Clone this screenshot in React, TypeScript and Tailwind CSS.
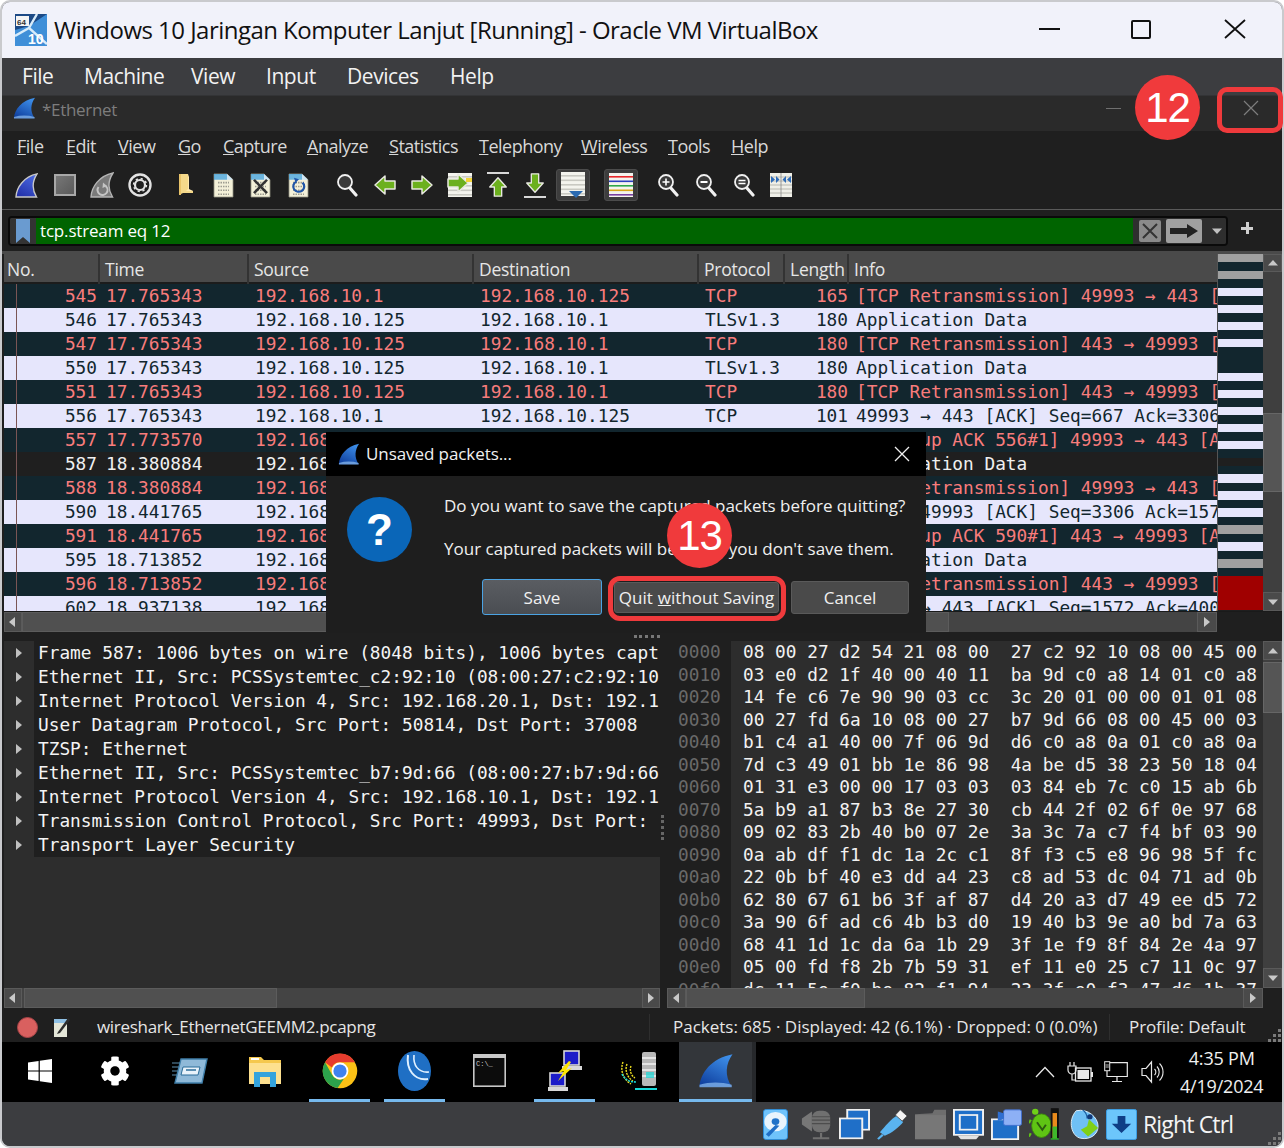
import React from "react";
import { FaCog } from "react-icons/fa";

const UI = "font-['Open_Sans','Noto_Sans',sans-serif]";
const MONO = "font-['DejaVu_Sans_Mono',monospace]";

/* ---------- data ---------- */
const A = "192.168.10.1";
const B = "192.168.10.125";
type Row = [string, string, string, string, string, string, string, "r" | "l" | "s"];
const rows: Row[] = [
  ["545", "17.765343", A, B, "TCP", "165", "[TCP Retransmission] 49993 → 443 [", "r"],
  ["546", "17.765343", B, A, "TLSv1.3", "180", "Application Data", "l"],
  ["547", "17.765343", B, A, "TCP", "180", "[TCP Retransmission] 443 → 49993 [", "r"],
  ["550", "17.765343", B, A, "TLSv1.3", "180", "Application Data", "l"],
  ["551", "17.765343", B, A, "TCP", "180", "[TCP Retransmission] 443 → 49993 [", "r"],
  ["556", "17.765343", A, B, "TCP", "101", "49993 → 443 [ACK] Seq=667 Ack=3306", "l"],
  ["557", "17.773570", A, B, "TCP", "101", "[TCP Dup ACK 556#1] 49993 → 443 [A", "r"],
  ["587", "18.380884", A, B, "TLSv1.3", "1006", "Application Data", "s"],
  ["588", "18.380884", A, B, "TCP", "1006", "[TCP Retransmission] 49993 → 443 [", "r"],
  ["590", "18.441765", B, A, "TCP", "101", "443 → 49993 [ACK] Seq=3306 Ack=157", "l"],
  ["591", "18.441765", B, A, "TCP", "101", "[TCP Dup ACK 590#1] 443 → 49993 [A", "r"],
  ["595", "18.713852", B, A, "TLSv1.3", "180", "Application Data", "l"],
  ["596", "18.713852", B, A, "TCP", "180", "[TCP Retransmission] 443 → 49993 [", "r"],
  ["602", "18.937138", A, B, "TCP", "101", "49993 → 443 [ACK] Seq=1572 Ack=400", "l"],
];
const details = [
  "Frame 587: 1006 bytes on wire (8048 bits), 1006 bytes capt",
  "Ethernet II, Src: PCSSystemtec_c2:92:10 (08:00:27:c2:92:10",
  "Internet Protocol Version 4, Src: 192.168.20.1, Dst: 192.1",
  "User Datagram Protocol, Src Port: 50814, Dst Port: 37008",
  "TZSP: Ethernet",
  "Ethernet II, Src: PCSSystemtec_b7:9d:66 (08:00:27:b7:9d:66",
  "Internet Protocol Version 4, Src: 192.168.10.1, Dst: 192.1",
  "Transmission Control Protocol, Src Port: 49993, Dst Port: ",
  "Transport Layer Security",
];
const hex: [string, string, string][] = [
  ["0000", "08 00 27 d2 54 21 08 00", "27 c2 92 10 08 00 45 00"],
  ["0010", "03 e0 d2 1f 40 00 40 11", "ba 9d c0 a8 14 01 c0 a8"],
  ["0020", "14 fe c6 7e 90 90 03 cc", "3c 20 01 00 00 01 01 08"],
  ["0030", "00 27 fd 6a 10 08 00 27", "b7 9d 66 08 00 45 00 03"],
  ["0040", "b1 c4 a1 40 00 7f 06 9d", "d6 c0 a8 0a 01 c0 a8 0a"],
  ["0050", "7d c3 49 01 bb 1e 86 98", "4a be d5 38 23 50 18 04"],
  ["0060", "01 31 e3 00 00 17 03 03", "03 84 eb 7c c0 15 ab 6b"],
  ["0070", "5a b9 a1 87 b3 8e 27 30", "cb 44 2f 02 6f 0e 97 68"],
  ["0080", "09 02 83 2b 40 b0 07 2e", "3a 3c 7a c7 f4 bf 03 90"],
  ["0090", "0a ab df f1 dc 1a 2c c1", "8f f3 c5 e8 96 98 5f fc"],
  ["00a0", "22 0b bf 40 e3 dd a4 23", "c8 ad 53 dc 04 71 ad 0b"],
  ["00b0", "62 80 67 61 b6 3f af 87", "d4 20 a3 d7 49 ee d5 72"],
  ["00c0", "3a 90 6f ad c6 4b b3 d0", "19 40 b3 9e a0 bd 7a 63"],
  ["00d0", "68 41 1d 1c da 6a 1b 29", "3f 1e f9 8f 84 2e 4a 97"],
  ["00e0", "05 00 fd f8 2b 7b 59 31", "ef 11 e0 25 c7 11 0c 97"],
  ["00f0", "dc 11 5e f0 be 82 f1 94", "23 3f e0 f3 47 d6 1b 37"],
];
const GR = "bg-[#a0a0a0]", DK = "bg-[#12262e]", LT = "bg-[#e6e6fc]";
const mini: [number, string][] = [
  [8, GR], [8.67, DK], [8.33, GR], [8.67, DK], [8.33, LT], [8.67, DK], [8.33, LT], [8.67, DK], [8.33, LT], [8.67, DK], [8.33, LT],
  [25.67, DK], [8.33, LT], [8.67, DK], [8.33, LT], [8.67, DK], [8.33, LT], [8.67, DK], [8.33, LT], [8.67, DK], [8.33, LT], [8.67, DK],
  [8.33, "bg-[#1f1f1f]"], [8.67, DK], [8.33, LT], [8.67, DK], [8.33, LT], [8.67, DK], [8.33, LT], [8.67, DK], [8.33, GR], [8.67, DK], [8.33, LT], [8.67, DK], [8.33, GR], [8.67, DK],
  [33.33, "bg-[#a00000]"],
];

/* ---------- icons ---------- */
function Fin({ w = 24, h = 26, id, c1 = "#3d8ee8", c2 = "#0f3f9e", stroke }: { w?: number; h?: number; id: string; c1?: string; c2?: string; stroke?: string }) {
  return (
    <svg width={w} height={h} viewBox="0 0 24 26" preserveAspectRatio="none">
      <defs>
        <linearGradient id={id} x1="0.7" y1="0" x2="0.2" y2="1">
          <stop offset="0" stopColor={c1} />
          <stop offset="1" stopColor={c2} />
        </linearGradient>
      </defs>
      <path d="M1 25C1.5 15 9 4 23 1C18.5 8 17.5 17 22.5 25Z" fill={`url(#${id})`} stroke={stroke} strokeWidth={stroke ? 1.4 : 0} />
      {!stroke && <path d="M1 23.5C8 21.5 15 21.5 22.5 23.5V25.5H1Z" fill="#7fb0e8" opacity="0.8" />}
    </svg>
  );
}
function RestartIcon() {
  return (
    <svg width="24" height="26" viewBox="0 0 24 26">
      <path d="M1 25C1.5 15 9 4 23 1C18.5 8 17.5 17 22.5 25Z" fill="#7a7a7a" stroke="#b4b4b4" strokeWidth="1.4" />
      <path d="M8.5 15a5 5 0 1 0 7 -1" fill="none" stroke="#c4c4c4" strokeWidth="2" />
      <path d="M13 10.5l4 3.5-4.5 2z" fill="#c4c4c4" />
    </svg>
  );
}
function GearIcon() {
  return (
    <svg width="24" height="24" viewBox="0 0 24 24">
      <circle cx="12" cy="12" r="10.5" fill="none" stroke="#e2e2e2" strokeWidth="2.4" />
      <circle cx="12" cy="12" r="5" fill="none" stroke="#e2e2e2" strokeWidth="2.2" />
      <circle cx="12" cy="12" r="6.4" fill="none" stroke="#e2e2e2" strokeWidth="1.6" strokeDasharray="2.2 2.8" />
    </svg>
  );
}
function FolderSmall() {
  return (
    <svg width="16" height="24" viewBox="0 0 16 24">
      <path d="M1 1H10V17L15 18V20H5L1 22Z" fill="#f5d98a" />
      <path d="M1 1H3V22H1Z" fill="#e9c46a" />
      <path d="M10 1L11 4V16L15 18H8L10 16Z" fill="#ffe9ae" />
    </svg>
  );
}
function Doc({ children, corner = "#3fa2e0" }: { children?: React.ReactNode; corner?: string }) {
  return (
    <svg width="21" height="25" viewBox="0 0 21 26" preserveAspectRatio="none">
      <path d="M1 1H14L20 7V25H1Z" fill="#f3f0d8" stroke="#8f8f80" strokeWidth="0.8" />
      <path d="M1 1H14V7H1Z" fill={corner} opacity="0.75" />
      <path d="M14 1L20 7H14Z" fill="#cfe6f5" />
      <path d="M5 10h11M5 14h11M5 18h11M5 22h11" stroke="#9c9c90" strokeWidth="1.6" strokeDasharray="1.5 1" />
      {children}
    </svg>
  );
}
function Lens({ mark }: { mark?: "plus" | "minus" | "eq" }) {
  return (
    <svg width="22" height="24" viewBox="0 0 22 24">
      <path d="M13 14l7 8" stroke="#f0f0f0" strokeWidth="3.2" strokeLinecap="round" />
      <circle cx="9" cy="9" r="7" fill="#3a3a3a" stroke="#f0f0f0" strokeWidth="1.8" />
      {mark === "plus" && <path d="M5.5 9h7M9 5.5v7" stroke="#fff" strokeWidth="1.6" />}
      {mark === "minus" && <path d="M5.5 9h7" stroke="#fff" strokeWidth="1.8" />}
      {mark === "eq" && <path d="M5.5 7.5h7M5.5 10.5h7" stroke="#fff" strokeWidth="1.4" />}
    </svg>
  );
}
function ArrowG({ dir, s = 24 }: { dir: "l" | "r" | "u" | "d"; s?: number }) {
  const rot = { r: 0, l: 180, d: 90, u: 270 }[dir];
  return (
    <svg width={s} height={s} viewBox="0 0 24 24">
      <g transform={`rotate(${rot} 12 12)`}>
        <path d="M2 8H12V3L22 12L12 21V16H2Z" fill="#6cb01e" stroke="#e8e8e0" strokeWidth="1.5" strokeLinejoin="round" />
      </g>
    </svg>
  );
}
function Lines({ color }: { color?: boolean }) {
  const cs = color ? ["#e8272a", "#2a3ec0", "#2ea84a", "#d9a516", "#7a3fa0"] : ["#c9c9c2", "#c9c9c2", "#c9c9c2", "#c9c9c2", "#c9c9c2"];
  return (
    <svg width="24" height="24" viewBox="0 0 24 24">
      <rect x="0" y="0" width="24" height="24" fill="#f4f4ee" />
      {[3, 7.5, 12, 16.5, 21].map((y, i) => (
        <rect key={y} x="0" y={y} width="24" height="1.6" fill={cs[i]} />
      ))}
    </svg>
  );
}
const Slot = ({ children }: { children: React.ReactNode }) => (
  <div className="w-[37.7px] h-full flex items-center justify-center shrink-0">{children}</div>
);
function ToolBtn({ children }: { children: React.ReactNode }) {
  return (
    <div className="w-[37.7px] h-full flex items-center justify-center shrink-0">
      <div className="w-[34px] h-[32px] rounded-[3px] bg-[#3d3d3d] border border-[#4c4c4c] flex items-center justify-center">{children}</div>
    </div>
  );
}
function WinLogo() {
  return (
    <svg width="24" height="24" viewBox="0 0 24 24" fill="#fff">
      <path d="M0 3.4L10.6 2V11.4H0ZM11.8 1.8L24 0V11.4H11.8ZM0 12.6H10.6V22L0 20.6ZM11.8 12.6H24V24L11.8 22.2Z" />
    </svg>
  );
}
function ServerMgr() {
  return (
    <svg width="36" height="28" viewBox="0 0 36 28">
      <path d="M0 6h10M0 10h8M0 14h8M0 18h6" stroke="#5f8fb0" strokeWidth="1.2" />
      <path d="M9 2H35L30 26H3Z" fill="#8fb9d8" stroke="#3f7ea8" strokeWidth="1.4" />
      <path d="M11 10H28L26 18H9Z" fill="#e8f2fa" stroke="#2b6d99" />
      <path d="M14 13H24" stroke="#2b6d99" strokeWidth="1.5" />
    </svg>
  );
}
function ExplorerIcon() {
  return (
    <svg width="32" height="32" viewBox="0 0 32 32">
      <path d="M0 2H12L15 5H32V29H0Z" fill="#f5c84e" />
      <path d="M0 8H32V29H0Z" fill="#fde08f" />
      <path d="M2 3H10V5H2Z" fill="#fff" />
      <path d="M5 17H27V32H21V22H11V32H5Z" fill="#35a3dc" />
    </svg>
  );
}
function Chrome() {
  return (
    <svg width="36" height="36" viewBox="0 0 24 24">
      <circle cx="12" cy="12" r="11.5" fill="#fbc116" />
      <path d="M2 6.2A11.5 11.5 0 0 1 22 6.2H12A6 6 0 0 0 6.6 9.6Z" fill="#e53c2e" />
      <path d="M2 6.2A11.5 11.5 0 0 0 10.4 23.4L14.6 17.2A6 6 0 0 1 6.6 14.4Z" fill="#2ca24c" />
      <circle cx="12" cy="12" r="5.6" fill="#fff" />
      <circle cx="12" cy="12" r="4.4" fill="#3f82ee" />
    </svg>
  );
}
function WinBox() {
  return (
    <svg width="33" height="40" viewBox="0 0 33 40">
      <ellipse cx="16.5" cy="20" rx="16.5" ry="20" fill="#1f6fc4" />
      <path d="M10 4C8 18 16 30 30 28" fill="none" stroke="#dff0ff" strokeWidth="2" />
      <path d="M16 4C15 14 20 22 31 21" fill="none" stroke="#dff0ff" strokeWidth="1.6" />
    </svg>
  );
}
function Cmd() {
  return (
    <svg width="33" height="33" viewBox="0 0 33 33">
      <rect x="0.8" y="0.8" width="31.4" height="31.4" fill="#0c0c0c" stroke="#c8c8c8" strokeWidth="1.6" />
      <rect x="1" y="1" width="31" height="3" fill="#c8c8c8" />
      <text x="3" y="12" fontSize="7" fill="#c8c8c8" fontFamily="Liberation Mono, monospace">C:\_</text>
    </svg>
  );
}
function NetPcs() {
  return (
    <svg width="36" height="42" viewBox="0 0 36 42">
      <rect x="17" y="1" width="15" height="14" fill="#1c1cc8" stroke="#d8d8d8" strokeWidth="1.6" />
      <path d="M15 16h20v4H15z" fill="#d8d8d8" />
      <rect x="3" y="23" width="15" height="13" fill="#1c1cc8" stroke="#d8d8d8" strokeWidth="1.6" />
      <path d="M1 37h20v4H1z" fill="#d8d8d8" />
      <path d="M22 11L11 23L17 21L11 31L25 18L19 20L24 12Z" fill="#ffe600" />
    </svg>
  );
}
function Scanner() {
  return (
    <svg width="38" height="42" viewBox="0 0 38 42">
      <path d="M2 12a18 18 0 0 0 8 22M6 14a14 14 0 0 0 6 17M10 16a10 10 0 0 0 4 12" fill="none" stroke="#f0e020" strokeWidth="1.4" strokeDasharray="2 1" />
      <path d="M1 24c3 6 8 8 14 8" fill="none" stroke="#18d8d8" strokeWidth="1.6" strokeDasharray="2 1" />
      <rect x="21" y="2" width="14" height="34" rx="2" fill="#b8b8b8" />
      <path d="M21 8h14M21 14h14M21 20h14M21 26h14" stroke="#e4e4e4" strokeWidth="2" />
      <path d="M14 39h22" stroke="#18d8d8" strokeWidth="2" />
      <rect x="25" y="22" width="8" height="6" fill="#18d8d8" opacity="0.7" />
    </svg>
  );
}
function Tray() {
  return (
    <>
      <svg width="20" height="12" viewBox="0 0 20 12" className="ml-[279px] shrink-0">
        <path d="M1 11L10 1.5L19 11" fill="none" stroke="#e8e8e8" strokeWidth="1.3" />
      </svg>
      <svg width="26" height="22" viewBox="0 0 26 22" className="ml-[12px] shrink-0">
        <path d="M3 1v4M7 1v4M1 5h8v4a4 4 0 0 1-8 0zM5 13v6h4" fill="none" stroke="#e8e8e8" strokeWidth="1.2" />
        <rect x="8.5" y="7" width="15.5" height="13" fill="none" stroke="#e8e8e8" strokeWidth="1.3" />
        <rect x="10.5" y="9" width="11.5" height="9" fill="#e8e8e8" />
        <rect x="24" y="11" width="2" height="5" fill="#e8e8e8" />
      </svg>
      <svg width="24" height="22" viewBox="0 0 24 22" className="ml-[11px] shrink-0">
        <rect x="0.7" y="0.7" width="5" height="9" fill="#000" stroke="#e8e8e8" />
        <path d="M1.5 4h3.4M1.5 6h3.4" stroke="#e8e8e8" strokeWidth="0.8" />
        <path d="M6 1.7H23.3V15.5H3V10" fill="none" stroke="#e8e8e8" strokeWidth="1.2" />
        <path d="M13 15.5V20M8 20.5H18" stroke="#e8e8e8" strokeWidth="1.2" />
      </svg>
      <svg width="23" height="24" viewBox="0 0 23 24" className="ml-[13px] shrink-0">
        <path d="M1 8.5H5L10.5 2V22L5 15.5H1Z" fill="none" stroke="#e8e8e8" strokeWidth="1.2" />
        <path d="M13.5 9a4 4 0 0 1 0 6M16 6.5a8 8 0 0 1 0 11M18.5 3.5a12 12 0 0 1 0 17" fill="none" stroke="#e8e8e8" strokeWidth="1.1" />
      </svg>
    </>
  );
}
const SI = ({ children }: { children: React.ReactNode }) => (
  <div className="w-[38px] shrink-0 flex items-center justify-center">{children}</div>
);
function StatusIcons() {
  return (
    <>
      <SI>
        <svg width="25" height="31" viewBox="0 0 26 37" preserveAspectRatio="none">
          <rect x="0.5" y="0.5" width="25" height="36" rx="3" fill="#6fc3fb" stroke="#2a8fe0" />
          <circle cx="13" cy="15" r="11.5" fill="#e9f4fc" />
          <circle cx="13" cy="15" r="4" fill="#2072c8" />
          <path d="M13 19L3 30L6 33L17 20Z" fill="#1f6ec6" />
        </svg>
      </SI>
      <div className="w-[3px] shrink-0"></div>
      <SI>
        <svg width="31" height="31" viewBox="0 0 34 36" preserveAspectRatio="none">
          <path d="M1 11L12 3V26L1 18Z" fill="#777" />
          <rect x="12" y="2" width="20" height="25" rx="8" fill="#707070" />
          <path d="M12 9h20M12 13h20M12 17h20" stroke="#4d4d4d" strokeWidth="1.4" />
          <path d="M22 28V33M13 34H31" stroke="#707070" strokeWidth="2.4" />
        </svg>
      </SI>
      <SI>
        <svg width="31" height="31" viewBox="0 0 32 36" preserveAspectRatio="none">
          <rect x="8.5" y="1" width="22.5" height="23" fill="#1f6fc8" stroke="#f0f0f0" strokeWidth="2" />
          <rect x="1" y="11" width="23" height="23" fill="#1f6fc8" stroke="#f0f0f0" strokeWidth="2" />
        </svg>
      </SI>
      <SI>
        <svg width="31" height="31" viewBox="0 0 32 36" preserveAspectRatio="none">
          <path d="M3 27C8 20 15 11 20 8L27 15C24 20 15 28 8 31Z" fill="#5ab4f0" />
          <path d="M19 7L24 1L31 8L26 14Z" fill="#f4f4f4" stroke="#333" strokeWidth="0.6" />
          <path d="M6 30L1 35" stroke="#5ab4f0" strokeWidth="2.4" />
        </svg>
      </SI>
      <SI>
        <svg width="31" height="31" viewBox="0 0 32 36" preserveAspectRatio="none">
          <path d="M0 6L18 5L20 1H32V35H0Z" fill="#6e6e6e" />
          <path d="M0 7H32V35H0Z" fill="#777" />
        </svg>
      </SI>
      <SI>
        <svg width="31" height="31" viewBox="0 0 32 36" preserveAspectRatio="none">
          <rect x="1" y="1" width="30" height="29" fill="#1f6fc8" stroke="#f2f2f2" strokeWidth="2" />
          <rect x="7" y="7" width="18" height="17" fill="none" stroke="#f2f2f2" strokeWidth="2" />
          <path d="M5 31H27L24 35H8Z" fill="#e2e2e2" />
        </svg>
      </SI>
      <SI>
        <svg width="31" height="31" viewBox="0 0 32 36" preserveAspectRatio="none">
          <rect x="1" y="12" width="27" height="23" fill="#1f6fc8" stroke="#f2f2f2" strokeWidth="2" />
          <rect x="13" y="1" width="18.5" height="18" rx="2" fill="#8db0f5" stroke="#3f6fd0" />
          <path d="M13 5L7 3V14L13 12Z" fill="#2f6fd0" />
        </svg>
      </SI>
      <div className="w-px shrink-0"></div>
      <SI>
        <svg width="32" height="32" viewBox="0 0 36 38" preserveAspectRatio="none">
          <ellipse cx="14" cy="21" rx="11" ry="14" fill="#5fc414" stroke="#3f8c0c" />
          <circle cx="7" cy="4.5" r="3.6" fill="#6fd018" />
          <path d="M9 17L15 26L19 20" fill="none" stroke="#2c5a10" strokeWidth="2.2" />
          <path d="M2 14L0 18M2 30L0 34M26 30L28 35" stroke="#5fc414" strokeWidth="2.4" />
          <rect x="25" y="0.8" width="8" height="35.5" fill="#111" stroke="#111" />
          <rect x="26.5" y="6" width="5" height="30" fill="#e98b1c" />
          <rect x="26.5" y="22" width="5" height="14" fill="#3fb82c" />
          <rect x="24.5" y="36" width="9" height="1.4" fill="#26d626" />
        </svg>
      </SI>
      <SI>
        <svg width="31" height="31" viewBox="0 0 34 36" preserveAspectRatio="none">
          <path d="M9 2C22 -1 33 10 33 20C33 30 24 36 14 34C4 32 -1 14 9 2Z" fill="#6fc0f5" stroke="#e8f6ff" />
          <path d="M16 1C20 4 21 8 21 11" fill="none" stroke="#185a9e" strokeWidth="1.4" />
          <circle cx="24" cy="9" r="3" fill="#123a7a" />
          <path d="M23 12L33 22L22 32L14 24L21 20Z" fill="#7fd018" />
        </svg>
      </SI>
      <SI>
        <svg width="31" height="31" viewBox="0 0 32 36" preserveAspectRatio="none">
          <rect x="0.5" y="0.5" width="31" height="35" rx="2" fill="#6cc6fb" stroke="#3aa2ec" />
          <path d="M12 8H20V17H26L16 28L6 17H12Z" fill="#0f3e86" />
        </svg>
      </SI>
    </>
  );
}
function Grip({ className }: { className: string }) {
  return (
    <svg width="16" height="16" viewBox="0 0 16 16" fill="#7a7a7a" className={className}>
      <rect x="12" y="2" width="3" height="3" />
      <rect x="7" y="7" width="3" height="3" />
      <rect x="12" y="7" width="3" height="3" />
      <rect x="2" y="12" width="3" height="3" />
      <rect x="7" y="12" width="3" height="3" />
      <rect x="12" y="12" width="3" height="3" />
    </svg>
  );
}
const Tri = ({ d, c = "#c8c8c8" }: { d: "l" | "r" | "u" | "d"; c?: string }) => {
  const p = { l: "M9 2L3 7L9 12Z", r: "M4 2L10 7L4 12Z", u: "M2 9.5L7 4L12 9.5Z", d: "M2 4.5L7 10L12 4.5Z" }[d];
  return (
    <svg width="14" height="14" viewBox="0 0 14 14">
      <path d={p} fill={c} />
    </svg>
  );
};
const ScrollBtn = ({ d, cls }: { d: "l" | "r" | "u" | "d"; cls: string }) => (
  <div className={`${cls} shrink-0 flex items-center justify-center bg-[#4a4a4a] border border-[#5a5a5a]`}>
    <Tri d={d} />
  </div>
);
const Badge = ({ n, cls }: { n: string; cls: string }) => (
  <div className={`absolute ${cls} w-[65px] h-[65px] rounded-full bg-[#f03a3c] flex items-center justify-center text-white text-[42px] leading-none font-['Liberation_Sans',sans-serif] tracking-[-1px]`}>
    {n}
  </div>
);

/* ---------- app ---------- */
export default function App() {
  return (
    <div className={`relative w-[1284px] h-[1148px] overflow-hidden bg-white ${UI}`}>
      <div className="w-full h-full flex flex-col border-2 border-[#c9cacd] rounded-[10px] overflow-hidden bg-[#3c3d40]">
        {/* title bar */}
        <div className="h-[56px] shrink-0 bg-[#f1f2fa] flex items-center pl-[13px] text-[#111]">
          <svg width="32" height="32" viewBox="0 0 32 32" className="shrink-0">
            <rect width="32" height="32" fill="#1c4a86" />
            <path d="M0 16L14 12L32 0V32H0Z" fill="#3f8fd8" />
            <path d="M22 0L14 14L32 30M0 22L14 14" stroke="#d8ecfa" strokeWidth="2.4" fill="none" />
            <rect x="1" y="2" width="13" height="10" fill="#f4f4f4" />
            <text x="2" y="10.5" fontSize="8" fontWeight="700" fill="#333" fontFamily="Liberation Sans, sans-serif">64</text>
            <text x="13" y="30" fontSize="14" fontWeight="700" fill="#fff" fontFamily="Liberation Sans, sans-serif">10</text>
          </svg>
          <div className="ml-[7px] text-[24px] leading-none tracking-[-0.53px] whitespace-nowrap">Windows 10 Jaringan Komputer Lanjut [Running] - Oracle VM VirtualBox</div>
          <div className="ml-auto flex items-center">
            <div className="w-[21px] h-[2px] bg-[#111] mb-[2px]"></div>
            <div className="ml-[71px] w-[20px] h-[19px] border-2 border-[#111] rounded-[2px] mb-[2px]"></div>
            <svg width="22" height="20" viewBox="0 0 22 20" className="ml-[73px] mr-[36px] mb-[2px]">
              <path d="M1 1L21 19M21 1L1 19" stroke="#111" strokeWidth="1.8" />
            </svg>
          </div>
        </div>

        {/* vbox menu */}
        <div className="h-[38px] shrink-0 bg-[#3c3d40] flex items-center pl-[20px] text-[21px] text-[#f2f2f2] leading-none tracking-[-0.45px] border-b border-[#333436]">
          <div className="w-[62px]">File</div>
          <div className="w-[107px]">Machine</div>
          <div className="w-[75px]">View</div>
          <div className="w-[81px]">Input</div>
          <div className="w-[103px]">Devices</div>
          <div>Help</div>
        </div>

        {/* wireshark title */}
        <div className="h-[35px] shrink-0 bg-[#2a2a2a] flex items-center pl-[11px] pb-[11px]">
          <Fin id="fin-title" w={23} h={22} />
          <div className="ml-[6px] text-[17px] text-[#7d7d7d] tracking-[-0.3px] mt-[3px]">*Ethernet</div>
          <div className="ml-auto mr-[161px] w-[15px] h-px bg-[#707070]"></div>
        </div>

        {/* wireshark menu */}
        <div className="h-[32px] shrink-0 bg-[#1f1f1f] flex items-center pl-[15px] pb-[2px] text-[18px] text-[#d8d8d8] leading-none tracking-[-0.5px]">
          {[
            ["w-[49px]", "F", "ile"], ["w-[52px]", "E", "dit"], ["w-[60px]", "V", "iew"], ["w-[45px]", "G", "o"],
            ["w-[84px]", "C", "apture"], ["w-[82px]", "A", "nalyze"], ["w-[90px]", "S", "tatistics"], ["w-[102px]", "T", "elephony"],
            ["w-[87px]", "W", "ireless"], ["w-[63px]", "T", "ools"], ["w-[50px]", "H", "elp"],
          ].map(([w, a, b], i) => (
            <div key={i} className={`${w} whitespace-nowrap`}><u>{a}</u>{b}</div>
          ))}
        </div>

        {/* toolbar */}
        <div className="h-[46px] shrink-0 bg-[#1f1f1f] flex items-center pl-[6px] pb-[2px]">
          <Slot><Fin id="fin-start" w={23} h={25} c1="#4a68e0" c2="#2230a8" stroke="#c8c8c8" /></Slot>
          <Slot>
            <div className="w-[22px] h-[22px] bg-gradient-to-br from-[#777] to-[#5a5a5a] border-[2px] border-[#a8a8a8]"></div>
          </Slot>
          <Slot><RestartIcon /></Slot>
          <Slot><GearIcon /></Slot>
          <div className="w-[8px] shrink-0"></div>
          <Slot><FolderSmall /></Slot>
          <Slot><Doc /></Slot>
          <Slot>
            <Doc corner="#3fa2e0">
              <path d="M4 7L17 21M17 7L4 21" stroke="#333" strokeWidth="2.6" />
            </Doc>
          </Slot>
          <Slot>
            <Doc>
              <path d="M14.5 10a5.5 5.5 0 1 1 -6 -1" fill="none" stroke="#2056a8" strokeWidth="2.2" />
              <path d="M6 5l5 1.5-3.4 3.6z" fill="#2056a8" />
            </Doc>
          </Slot>
          <div className="w-[10.5px] shrink-0"></div>
          <Slot><Lens /></Slot>
          <Slot><ArrowG dir="l" /></Slot>
          <Slot><ArrowG dir="r" /></Slot>
          <Slot>
            <div className="relative w-[24px] h-[24px]">
              <Lines />
              <div className="absolute left-[-2px] top-[-2px]"><ArrowG dir="r" /></div>
              <div className="absolute right-0 top-[5px] w-[6px] h-[4px] bg-[#f2d43a]"></div>
            </div>
          </Slot>
          <Slot>
            <div className="flex flex-col items-center gap-[2px]">
              <div className="w-[22px] h-[2px] bg-[#d8d8d8]"></div>
              <ArrowG dir="u" s={22} />
            </div>
          </Slot>
          <Slot>
            <div className="flex flex-col items-center gap-[2px]">
              <ArrowG dir="d" s={22} />
              <div className="w-[22px] h-[2px] bg-[#d8d8d8]"></div>
            </div>
          </Slot>
          <ToolBtn>
            <div className="relative w-[24px] h-[26px] overflow-hidden">
              <Lines />
              <div className="absolute left-[8px] bottom-[0px] w-0 h-0 border-l-[7px] border-r-[7px] border-t-[7px] border-l-transparent border-r-transparent border-t-[#2b6ab0]"></div>
            </div>
          </ToolBtn>
          <div className="w-[10px] shrink-0"></div>
          <ToolBtn><Lines color /></ToolBtn>
          <div className="w-[10px] shrink-0"></div>
          <Slot><Lens mark="plus" /></Slot>
          <Slot><Lens mark="minus" /></Slot>
          <Slot><Lens mark="eq" /></Slot>
          <Slot>
            <svg width="22" height="24" viewBox="0 0 22 24">
              <rect width="22" height="24" fill="#efefe8" />
              <path d="M0 4h22M0 8h22M0 12h22M0 16h22M0 20h22" stroke="#b8b8b0" strokeWidth="1" />
              <path d="M11 0v24" stroke="#888" strokeWidth="0.8" />
              <path d="M1 3L5 6.5L1 10ZM9.5 6.5L6 3V10Z" fill="#2f6cb8" />
              <path d="M21 3L17 6.5L21 10ZM12.5 6.5L16 3V10Z" fill="#2f6cb8" />
            </svg>
          </Slot>
        </div>

        {/* filter */}
        <div className="h-[45px] shrink-0 bg-[#1f1f1f] border-t border-[#5a5a5a] border-b-[3px] border-b-[#4a4a4a] pt-[6px] flex items-start pl-[6px]">
          <div className="w-[1220px] h-[30px] rounded-[4px] border-2 border-[#0a0a0a] flex items-stretch overflow-hidden bg-[#2e2e2e]">
            <div className="w-[26px] shrink-0 flex items-center justify-center bg-[#333]">
              <svg width="14" height="24" viewBox="0 0 14 24">
                <path d="M0 0H14V24L7 18L0 24Z" fill="#6a9bd0" />
              </svg>
            </div>
            <div className="flex-1 bg-[#006400] text-white text-[17px] leading-[25px] pl-[4px] tracking-[-0.17px]">tcp.stream eq 12</div>
            <div className="w-[93px] shrink-0 flex items-center bg-[#2e2e2e] pl-[6px]">
              <div className="w-[22px] h-[22px] bg-[#8a8a8a] rounded-[2px] flex items-center justify-center">
                <svg width="16" height="16" viewBox="0 0 16 16"><path d="M1 1L15 15M15 1L1 15" stroke="#333" strokeWidth="2" /></svg>
              </div>
              <div className="ml-[5px] w-[36px] h-[24px] bg-[#a0a0a0] rounded-[2px] flex items-center justify-center">
                <svg width="30" height="16" viewBox="0 0 30 16"><path d="M1 5H18V1L29 8L18 15V11H1Z" fill="#222" /></svg>
              </div>
              <div className="ml-[8px]"><Tri d="d" c="#c0c0c0" /></div>
            </div>
          </div>
          <div className="ml-[13px] mt-[6px] relative w-[12px] h-[12px]">
            <div className="absolute left-[5px] top-0 w-[2.5px] h-[12px] bg-[#cfcfcf]"></div>
            <div className="absolute left-0 top-[5px] w-[12px] h-[2.5px] bg-[#cfcfcf]"></div>
          </div>
        </div>

        {/* packet list */}
        <div className="h-[378px] shrink-0 flex flex-col pl-[2px] bg-[#1f1f1f]">
          <div className="h-[357px] shrink-0 flex">
            <div className="w-[1214px] shrink-0 flex flex-col overflow-hidden border-r border-[#555] relative">
              <div className="h-[30px] shrink-0 grid grid-cols-[96px_149px_225px_225px_86px_64px_1fr] bg-[#4a4a4a] border-b-2 border-[#1c1c1c] text-[17.5px] text-[#e6e6e6] tracking-[-0.25px] leading-[30px]">
                <div className="pl-[3px] border-r-2 border-[#333]">No.</div>
                <div className="pl-[5px] border-r-2 border-[#333]">Time</div>
                <div className="pl-[5px] border-r-2 border-[#333]">Source</div>
                <div className="pl-[5px] border-r-2 border-[#333]">Destination</div>
                <div className="pl-[5px] border-r-2 border-[#333]">Protocol</div>
                <div className="pl-[5px] border-r-2 border-[#333]">Length</div>
                <div className="pl-[5px]">Info</div>
              </div>
              {rows.map((r) => {
                const cls = r[7] === "r" ? "bg-[#12262e] text-[#f87c7c]" : r[7] === "l" ? "bg-[#e6e6fc] text-[#12262e]" : "bg-[#1f1f1f] text-[#f0f0f0]";
                return (
                  <div key={r[0]} className={`h-[24px] shrink-0 grid grid-cols-[93px_158px_225px_225px_100px_43px_1fr] whitespace-pre text-[17.8px] leading-[23px] overflow-hidden ${MONO} ${cls}`}>
                    <div className="text-right">{r[0]}</div>
                    <div className="pl-[9px]">{r[1]}</div>
                    <div>{r[2]}</div>
                    <div>{r[3]}</div>
                    <div>{r[4]}</div>
                    <div className="text-right">{r[5]}</div>
                    <div className="pl-[8px] overflow-hidden">{r[6]}</div>
                  </div>
                );
              })}
              <div className="absolute left-[12px] top-[30px] bottom-0 w-px bg-[#7a5555]"></div>
            </div>
            <div className="w-[45px] shrink-0 flex flex-col overflow-hidden">
              {mini.map(([h, c], i) => (
                <div key={i} className={`${c} shrink-0`} style={{ height: h }}></div>
              ))}
            </div>
            <div className="w-[19px] shrink-0 flex flex-col bg-[#3f3f3f]">
              <ScrollBtn d="u" cls="h-[18px]" />
              <div className="h-[141px]"></div>
              <div className="h-[79px] bg-[#555] border border-[#666]"></div>
              <div className="flex-1"></div>
              <ScrollBtn d="d" cls="h-[19px]" />
            </div>
          </div>
          <div className="h-[21px] shrink-0 flex border-t border-[#1a1a1a]">
            <div className="w-[1213px] flex bg-[#444]">
              <ScrollBtn d="l" cls="w-[18px]" />
              <div className="w-[927px] bg-[#505050] border border-[#5c5c5c]"></div>
              <div className="flex-1"></div>
              <ScrollBtn d="r" cls="w-[20px]" />
            </div>
          </div>
        </div>

        {/* splitter */}
        <div className="h-[9px] shrink-0 bg-[#1f1f1f]"></div>

        {/* panes */}
        <div className="h-[367px] shrink-0 flex pl-[2px] bg-[#1f1f1f]">
          <div className="w-[656px] shrink-0 flex flex-col">
            <div className="h-[347px] shrink-0 flex bg-[#2d2d2d] overflow-hidden">
              <div className="w-[30px] shrink-0 flex flex-col">
                {details.map((d) => (
                  <div key={d} className="h-[24px] shrink-0 flex items-center justify-center">
                    <Tri d="r" c="#c0c0c0" />
                  </div>
                ))}
              </div>
              <div className={`flex-1 min-w-0 flex flex-col overflow-hidden ${MONO} text-[17.8px] leading-[23px] text-[#f4f4f4] whitespace-pre`}>
                {details.map((d) => (
                  <div key={d} className="h-[24px] shrink-0 bg-[#1f1f1f] pl-[4px] overflow-hidden">{d}</div>
                ))}
              </div>
            </div>
            <div className="h-[20px] shrink-0 flex bg-[#444]">
              <ScrollBtn d="l" cls="w-[18px]" />
              <div className="w-[253px] ml-[2px] bg-[#505050] border border-[#5c5c5c]"></div>
              <div className="flex-1"></div>
              <ScrollBtn d="r" cls="w-[18px]" />
            </div>
          </div>
          <div className="w-[7px] shrink-0"></div>
          <div className="flex-1 min-w-0 flex flex-col">
            <div className="h-[347px] shrink-0 flex overflow-hidden">
              <div className={`w-[64px] shrink-0 bg-[#1f1f1f] flex flex-col pl-[11px] text-[#6a6a6a] ${MONO} text-[17.8px] leading-[22.5px]`}>
                {hex.map((h) => <div key={h[0]} className="h-[22.5px] shrink-0">{h[0]}</div>)}
              </div>
              <div className={`w-[532px] shrink-0 bg-[#2d2d2d] flex flex-col pl-[12px] text-[#f2f2f2] ${MONO} text-[17.8px] leading-[22.5px] whitespace-pre`}>
                {hex.map((h) => <div key={h[0]} className="h-[22.5px] shrink-0">{h[1] + "  " + h[2]}</div>)}
              </div>
              <div className="flex-1 flex flex-col bg-[#3f3f3f]">
                <ScrollBtn d="u" cls="h-[19px]" />
                <div className="mt-[2px] h-[51px] bg-[#555] border border-[#666]"></div>
                <div className="flex-1"></div>
                <ScrollBtn d="d" cls="h-[20px]" />
              </div>
            </div>
            <div className="h-[20px] shrink-0 flex bg-[#444] mr-[19px]">
              <ScrollBtn d="l" cls="w-[19px]" />
              <div className="w-[179px] bg-[#505050] border border-[#5c5c5c]"></div>
              <div className="flex-1"></div>
              <ScrollBtn d="r" cls="w-[20px]" />
            </div>
          </div>
        </div>

        {/* status bar */}
        <div className="h-[34px] shrink-0 bg-[#1f1f1f] flex items-center pt-[4px] text-[17px] text-[#e6e6e6] whitespace-nowrap relative">
          <div className="ml-[15px] w-[21px] h-[21px] rounded-full bg-[#d9605f] border border-[#a94448] shrink-0"></div>
          <svg width="18" height="22" viewBox="0 0 18 22" className="ml-[15px] shrink-0">
            <path d="M1 3H14V21H1Z" fill="#e4e6d8" />
            <path d="M1 3H14V7H1Z" fill="#8fc0e4" />
            <path d="M5 16L15 2L17 4L7 17L4 18Z" fill="#2c2c2c" />
          </svg>
          <div className="ml-[26px] w-[552px] tracking-[-0.3px]">wireshark_EthernetGEEMM2.pcapng</div>
          <div className="w-[24px] h-[26px] border-l border-[#2e2e2e] shrink-0"></div>
          <div className="w-[436px] shrink-0">Packets: 685 · Displayed: 42 (6.1%) · Dropped: 0 (0.0%)</div>
          <div className="w-[20px] h-[26px] border-l border-[#2e2e2e] shrink-0"></div>
          <div className="tracking-[-0.1px]">Profile: Default</div>
          <Grip className="absolute right-0 bottom-[-1px]" />
        </div>

        {/* taskbar */}
        <div className="h-[60px] shrink-0 bg-black flex items-stretch">
          {[
            <WinLogo key="a" />,
            <FaCog key="b" className="text-white text-[30px]" />,
            <ServerMgr key="c" />,
            <ExplorerIcon key="d" />,
            <Chrome key="e" />,
            <WinBox key="f" />,
            <Cmd key="g" />,
            <NetPcs key="h" />,
            <Scanner key="i" />,
          ].map((ic, i) => (
            <div key={i} className="w-[75px] shrink-0 flex flex-col items-center">
              <div className="flex-1 flex items-center justify-center">{ic}</div>
              {i === 4 || i === 5 || i === 7 ? (
                <div className="w-[61px] h-[3px] bg-[#76b9ed]"></div>
              ) : (
                <div className="h-[3px]"></div>
              )}
            </div>
          ))}
          <div className="w-[73px] shrink-0 flex flex-col items-center bg-[#33363a] ml-[2px]">
            <div className="flex-1 flex items-center justify-center"><Fin id="fin-task" w={36} h={35} /></div>
            <div className="w-full h-[3px] bg-[#76b9ed]"></div>
          </div>
          <div className="w-[4px] shrink-0 bg-[#26282b]"></div>
          <div className="flex-1 flex items-center">
            <Tray />
            <div className="ml-[16px] flex flex-col items-center text-[#f0f0f0] text-[18px] leading-[28px] tracking-[-0.2px] whitespace-nowrap">
              <div>4:35 PM</div>
              <div>4/19/2024</div>
            </div>
          </div>
        </div>

        {/* vbox status */}
        <div className="flex-1 bg-[#3c3d40] flex items-center pl-[754px] relative">
          <StatusIcons />
          <div className="ml-[3px] text-[23px] text-[#f4f4f4] tracking-[-0.85px] whitespace-nowrap">Right Ctrl</div>
          <Grip className="absolute right-0 bottom-0" />
        </div>
      </div>

      {/* dialog */}
      <div className="absolute left-[326px] top-[432px] w-[600px] h-[201px] bg-[#1e1e1e] flex flex-col text-[#f0f0f0]">
        <div className="h-[44px] shrink-0 bg-black flex items-center pl-[12px]">
          <Fin id="fin-dlg" w={22} h={22} />
          <div className="ml-[6px] text-[17px] tracking-[-0.08px]">Unsaved packets...</div>
          <svg width="16" height="16" viewBox="0 0 16 16" className="ml-auto mr-[16px]">
            <path d="M1 1L15 15M15 1L1 15" stroke="#f0f0f0" strokeWidth="1.3" />
          </svg>
        </div>
        <div className="flex pl-[21px] pt-[21px]">
          <div className="relative w-[65px] h-[65px] rounded-full bg-[#0a66b8] shrink-0 flex items-center justify-center text-white text-[44px] font-bold font-['Liberation_Sans',sans-serif] leading-none">?</div>
          <div className="ml-[32px] text-[17px] whitespace-nowrap leading-[24px] -mt-[3px]">
            <div className="h-[43px]">Do you want to save the captured packets before quitting?</div>
            <div>Your captured packets will be lost if you don't save them.</div>
          </div>
        </div>
        <div className="flex items-start pl-[156px] mt-[17px] text-[17px]">
          <div className="w-[120px] h-[36px] pt-[1px] rounded-[3px] bg-gradient-to-b from-[#5a5d62] to-[#4a4d52] border border-[#4ba3e3] flex items-center justify-center">Save</div>
          <div className="ml-[12px] mt-[3px] w-[165px] h-[31px] rounded-[3px] bg-[#4a4a4a] border border-[#5a5a5a] flex items-center justify-center whitespace-nowrap">Quit <u className="ml-[5px]">w</u>ithout Saving</div>
          <div className="ml-[12px] mt-[2px] w-[118px] h-[33px] rounded-[3px] bg-[#4a4a4a] border border-[#5a5a5a] flex items-center justify-center">Cancel</div>
        </div>
      </div>
      <div className="absolute left-[634px] top-[635px] w-[26px] h-[3px] border-t-[3px] border-dotted border-[#777]"></div>
      <div className="absolute left-[661px] top-[815px] w-[3px] h-[25px] border-l-[3px] border-dotted border-[#666]"></div>

      {/* annotations */}
      <div className="absolute left-[608px] top-[576px] w-[178px] h-[45px] rounded-[12px] border-[5px] border-[#ef3a3c]"></div>
      <div className="absolute left-[1217px] top-[87px] w-[66px] h-[46px] rounded-[10px] border-[5px] border-[#ef3a3c]"></div>
      <svg width="16" height="16" viewBox="0 0 16 16" className="absolute left-[1243px] top-[100px]">
        <path d="M1 1L15 15M15 1L1 15" stroke="#7d7d7d" strokeWidth="1.2" />
      </svg>
      <Badge n="12" cls="left-[1135px] top-[75px]" />
      <Badge n="13" cls="left-[667px] top-[503px]" />
    </div>
  );
}
